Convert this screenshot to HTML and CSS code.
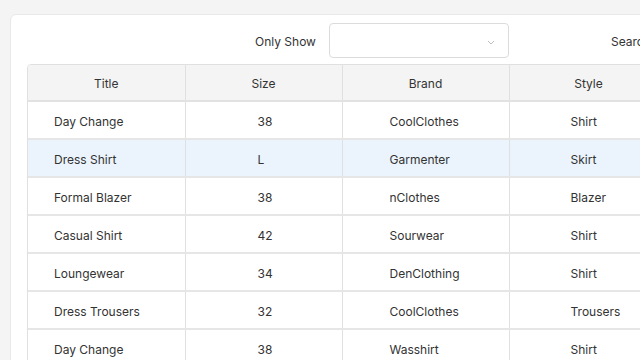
FILE: index.html
```html
<!DOCTYPE html>
<html>
<head>
<meta charset="utf-8">
<link rel="stylesheet" href="styles.css">
</head>
<body>
<div class="card">
  <div class="toolbar">
    <span class="label">Only Show</span>
    <div class="select">
      <svg class="chev" width="8" height="5" viewBox="0 0 8 5"><path d="M1 1 L4 4 L7 1" fill="none" stroke="#bdbdbd" stroke-width="1"/></svg>
    </div>
    <span class="label search">Search</span>
  </div>
  <div class="tablewrap">
    <table class="grid">
      <colgroup>
        <col class="c1"><col class="c2"><col class="c3"><col class="c4">
      </colgroup>
      <thead>
        <tr><th>Title</th><th>Size</th><th>Brand</th><th>Style</th></tr>
      </thead>
      <tbody>
        <tr><td class="t">Day Change</td><td class="s">38</td><td class="b">CoolClothes</td><td class="y">Shirt</td></tr>
        <tr class="sel"><td class="t">Dress Shirt</td><td class="s">L</td><td class="b">Garmenter</td><td class="y">Skirt</td></tr>
        <tr><td class="t">Formal Blazer</td><td class="s">38</td><td class="b">nClothes</td><td class="y">Blazer</td></tr>
        <tr><td class="t">Casual Shirt</td><td class="s">42</td><td class="b">Sourwear</td><td class="y">Shirt</td></tr>
        <tr><td class="t">Loungewear</td><td class="s">34</td><td class="b">DenClothing</td><td class="y">Shirt</td></tr>
        <tr><td class="t">Dress Trousers</td><td class="s">32</td><td class="b">CoolClothes</td><td class="y">Trousers</td></tr>
        <tr><td class="t">Day Change</td><td class="s">38</td><td class="b">Wasshirt</td><td class="y">Shirt</td></tr>
      </tbody>
    </table>
  </div>
</div>
</body>
</html>
```
FILE: styles.css
```css
html, body {
  margin: 0;
  padding: 0;
  background: #f4f4f4;
  font-family: Inter, "Noto Sans", sans-serif;
  font-size: 12px;
  color: #333;
  overflow: hidden;
}
.card {
  margin: 14px 0 0 10px;
  width: 720px;
  height: 400px;
  background: #fff;
  border: 1px solid #e8e8e8;
  border-radius: 6px;
  padding: 0 16px;
  box-sizing: border-box;
}
.toolbar {
  display: flex;
  align-items: center;
  height: 49px;
  padding-left: 228px;
}
.label {
  color: #333;
  white-space: nowrap;
  padding-top: 3px;
}
.select {
  position: relative;
  width: 180px;
  height: 35px;
  margin-left: 13px;
  margin-top: 2px;
  box-sizing: border-box;
  border: 1px solid #dcdcdc;
  border-radius: 4px;
}
.chev {
  position: absolute;
  right: 13px;
  top: 16px;
}
.search {
  margin-left: 102px;
}
.tablewrap {
  border: 1px solid #e0e0e0;
  border-radius: 4px;
  overflow: hidden;
  width: 680px;
}
.grid {
  border-collapse: collapse;
  table-layout: fixed;
  width: 640px;
}
.c1 { width: 157px; }
.c2 { width: 157px; }
.c3 { width: 167px; }
.c4 { width: 159px; }
.grid th {
  background: #f4f4f4;
  font-weight: normal;
  height: 34px;
  padding: 1px 0 0;
  text-align: center;
  border-right: 1px solid #e0e0e0;
  border-bottom: 2px solid #e2e2e2;
  color: #333;
}
.grid td {
  height: 33px;
  padding: 3px 0 0;
  text-align: left;
  border-right: 1px solid #e0e0e0;
  border-bottom: 2px solid #e6e6e6;
  color: #333;
  white-space: nowrap;
}
.grid td.t { padding-left: 26px; }
.grid td.s { padding-left: 72px; }
.grid td.b { padding-left: 47px; }
.grid td.y { padding-left: 61px; }
.grid tr.sel td {
  background: #ebf3fc;
}
```
